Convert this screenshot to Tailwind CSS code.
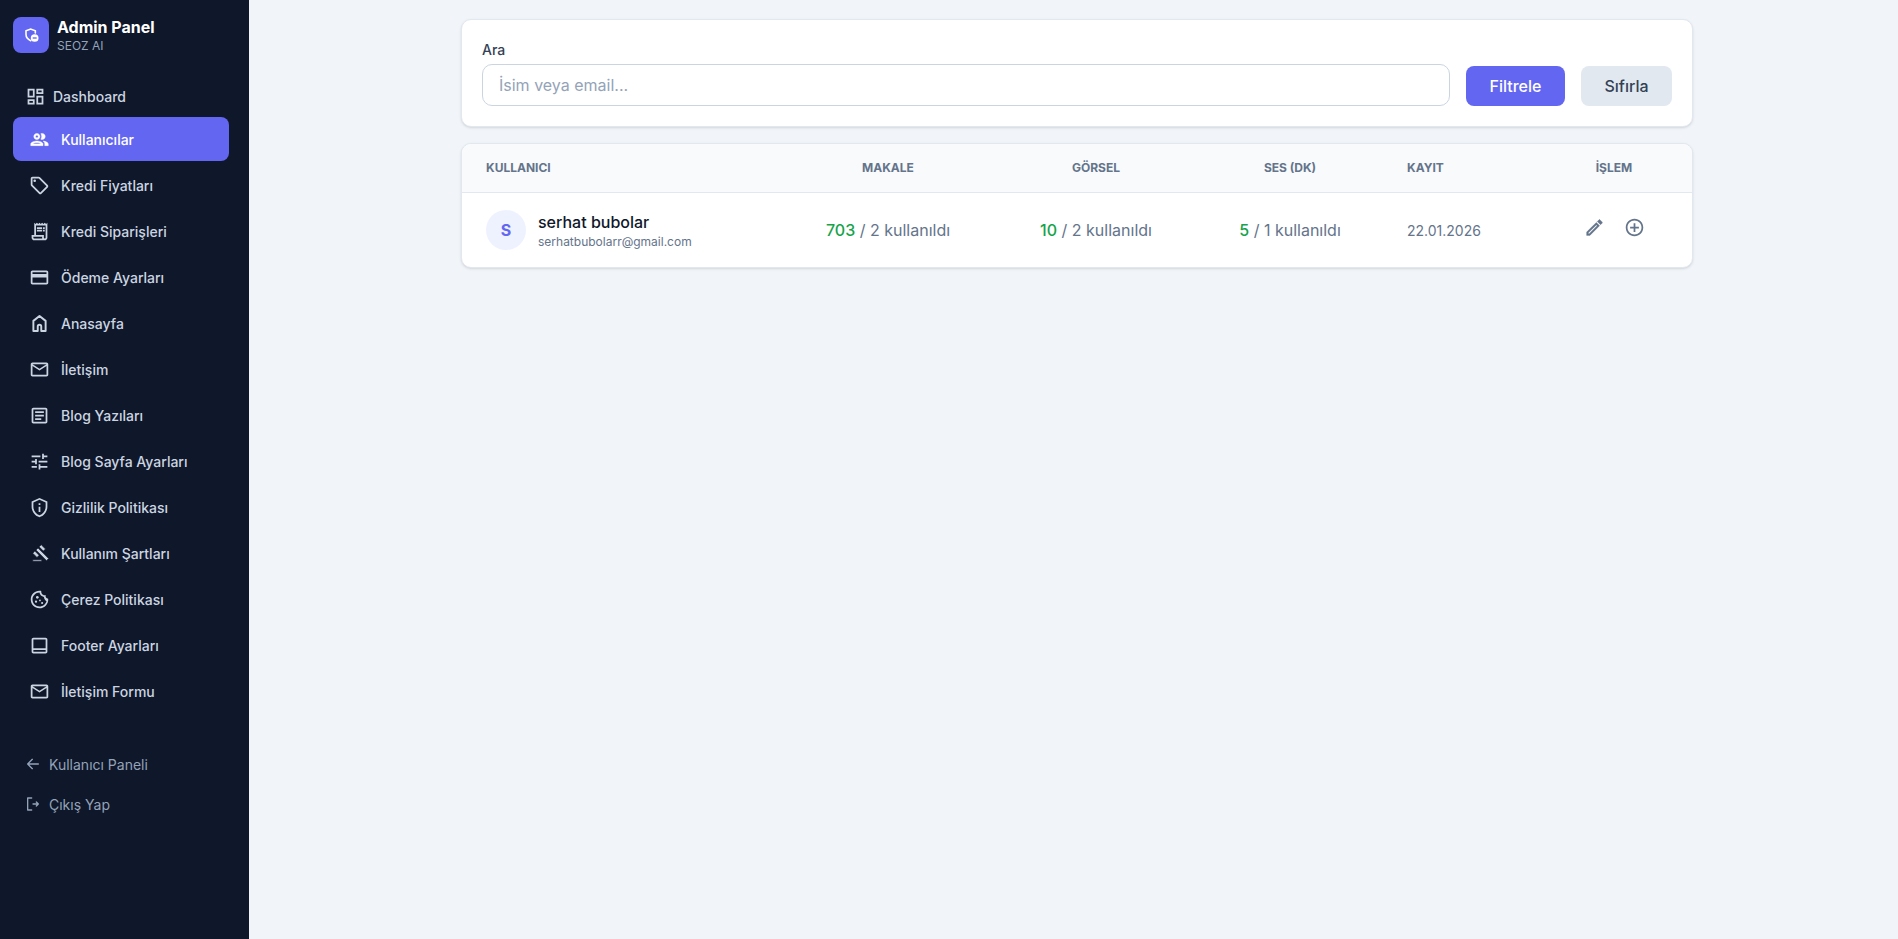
<!DOCTYPE html>
<html lang="tr">
<head>
<meta charset="utf-8">
<title>Admin Panel</title>
<script src="https://cdn.jsdelivr.net/npm/@tailwindcss/browser@4"></script>
</head>
<body class="bg-[#f1f5f9] font-['Inter',sans-serif]">
<div class="flex h-[939px] w-full overflow-hidden">
  <aside class="w-[249px] shrink-0 bg-[#0f172a] pl-[13px] pr-[20px] pt-[17px] flex flex-col">
    <div class="flex items-center gap-2 h-[36px]">
      <div class="w-[36px] h-[36px] rounded-lg bg-[#6366f1] flex items-center justify-center">
        <svg class="w-[16px] h-[16px] text-white" viewBox="0 0 24 24" fill="none" stroke="currentColor"><path stroke-width="2.400" stroke-linecap="round" d="M18.500 9V5.800L11.500 3 4.500 5.800V11c0 4.300 2.700 7.800 7 9.500"/><circle cx="17.500" cy="16.500" r="5.800" fill="currentColor" stroke="none"/><path stroke="#6366f1" stroke-width="2" d="M14.500 16.500h6"/></svg>
      </div>
      <div class="flex flex-col">
        <span class="text-white text-[16px] leading-[20px] font-bold">Admin Panel</span>
        <span class="text-[#94a3b8] text-[12px] leading-[16px] mt-px">SEOZ AI</span>
      </div>
    </div>
    <nav class="mt-[25px] flex flex-col gap-[2px] text-[14px] font-medium text-[#cbd5e1]">
      <a class="flex items-center gap-[7px] h-[36px] pl-[12px] mb-px"><svg class="w-[21px] h-[21px]" viewBox="0 0 24 24" fill="currentColor"><path d="M19 5v2h-4V5h4M9 5v6H5V5h4m10 8v6h-4v-6h4M9 17v2H5v-2h4M21 3h-8v6h8V3zM11 3H3v10h8V3zm10 8h-8v10h8V11zm-10 4H3v6h8v-6z"/></svg>Dashboard</a>
      <a class="flex items-center gap-[11px] h-[44px] pl-[16px] rounded-lg bg-[#6366f1] text-white"><svg class="w-[21px] h-[21px]" viewBox="0 0 24 24" fill="currentColor" stroke="currentColor" stroke-width="0.500"><path d="M9 13.750c-2.340 0-7 1.170-7 3.500V19h14v-1.750c0-2.330-4.660-3.500-7-3.500zM4.340 17c.84-.58 2.870-1.250 4.660-1.250s3.820.67 4.660 1.250H4.340zM9 12c1.930 0 3.500-1.570 3.500-3.500S10.930 5 9 5 5.500 6.570 5.500 8.500 7.070 12 9 12zm0-5c.83 0 1.500.67 1.500 1.500S9.830 10 9 10s-1.500-.67-1.500-1.500S8.170 7 9 7zm7.040 6.810c1.160.84 1.960 1.960 1.960 3.440V19h4v-1.750c0-2.020-3.500-3.170-5.960-3.440zM15 12c1.930 0 3.500-1.570 3.500-3.500S16.930 5 15 5c-.54 0-1.040.13-1.500.35.63.89 1 1.980 1 3.150s-.37 2.260-1 3.150c.46.22.96.35 1.500.35z"/></svg>Kullanıcılar</a>
      <a class="flex items-center gap-[11px] h-[44px] pl-[16px]"><svg class="w-[21px] h-[21px]" viewBox="0 0 24 24" fill="currentColor"><path d="M21.410 11.410l-8.830-8.830C12.210 2.210 11.700 2 11.170 2H4C2.900 2 2 2.900 2 4v7.170c0 .53.21 1.040.59 1.410l8.830 8.830c.78.78 2.050.78 2.830 0l7.170-7.170c.78-.78.78-2.040-.01-2.830zM12.830 20L4 11.170V4h7.170L20 12.830 12.830 20z"/><circle cx="6.500" cy="6.500" r="1.500"/></svg>Kredi Fiyatları</a>
      <a class="flex items-center gap-[11px] h-[44px] pl-[16px]"><svg class="w-[21px] h-[21px]" viewBox="0 0 24 24" fill="currentColor"><path d="M19.500 3.500 18 2l-1.500 1.500L15 2l-1.500 1.500L12 2l-1.500 1.500L9 2 7.500 3.500 6 2v14H3v3c0 1.660 1.340 3 3 3h12c1.660 0 3-1.340 3-3V2l-1.500 1.500zM15 20H6c-.55 0-1-.45-1-1v-1h10v2zm4-1c0 .55-.45 1-1 1s-1-.45-1-1v-3H8V5h11v14z"/><path d="M9 7h6v2H9zM16 7h2v2h-2zM9 10h6v2H9zM16 10h2v2h-2z"/></svg>Kredi Siparişleri</a>
      <a class="flex items-center gap-[11px] h-[44px] pl-[16px]"><svg class="w-[21px] h-[21px]" viewBox="0 0 24 24" fill="currentColor"><path d="M20 4H4c-1.110 0-1.990.89-1.990 2L2 18c0 1.110.89 2 2 2h16c1.110 0 2-.89 2-2V6c0-1.110-.89-2-2-2zm0 14H4v-6h16v6zm0-10H4V6h16v2z"/></svg>Ödeme Ayarları</a>
      <a class="flex items-center gap-[11px] h-[44px] pl-[16px]"><svg class="w-[21px] h-[21px]" viewBox="0 0 24 24" fill="none" stroke="currentColor" stroke-width="2.200" stroke-linejoin="round"><path d="M12 3.500 5 9v11.500h5v-5a2 2 0 0 1 4 0v5h5V9z"/></svg>Anasayfa</a>
      <a class="flex items-center gap-[11px] h-[44px] pl-[16px]"><svg class="w-[21px] h-[21px]" viewBox="0 0 24 24" fill="currentColor"><path d="M22 6c0-1.100-.9-2-2-2H4c-1.100 0-2 .9-2 2v12c0 1.100.9 2 2 2h16c1.100 0 2-.9 2-2V6zm-2 0l-8 5-8-5h16zm0 12H4V8l8 5 8-5v10z"/></svg>İletişim</a>
      <a class="flex items-center gap-[11px] h-[44px] pl-[16px]"><svg class="w-[21px] h-[21px]" viewBox="0 0 24 24" fill="currentColor"><path d="M19 5v14H5V5h14m0-2H5c-1.100 0-2 .9-2 2v14c0 1.100.9 2 2 2h14c1.100 0 2-.9 2-2V5c0-1.100-.9-2-2-2z"/><path d="M14 17H7v-2h7v2zm3-4H7v-2h10v2zm0-4H7V7h10v2z"/></svg>Blog Yazıları</a>
      <a class="flex items-center gap-[11px] h-[44px] pl-[16px]"><svg class="w-[21px] h-[21px]" viewBox="0 0 24 24" fill="currentColor"><path d="M3 17v2h6v-2H3zM3 5v2h10V5H3zm10 16v-2h8v-2h-8v-2h-2v6h2zM7 9v2H3v2h4v2h2V9H7zm14 4v-2H11v2h10zm-6-4h2V7h4V5h-4V3h-2v6z"/></svg>Blog Sayfa Ayarları</a>
      <a class="flex items-center gap-[11px] h-[44px] pl-[16px]"><svg class="w-[21px] h-[21px]" viewBox="0 0 24 24" fill="currentColor"><path d="M12 3.190l7 3.110V11c0 4.520-2.980 8.690-7 9.930-4.020-1.240-7-5.410-7-9.930V6.300l7-3.110M12 1L3 5v6c0 5.550 3.840 10.740 9 12 5.160-1.260 9-6.450 9-12V5l-9-4zm-1 6h2v2h-2zm0 4h2v6h-2z"/></svg>Gizlilik Politikası</a>
      <a class="flex items-center gap-[11px] h-[44px] pl-[16px]"><span class="w-[21px] h-[21px] flex items-center justify-center"><svg class="w-[18px] h-[18px] translate-x-px" viewBox="0 0 24 24" fill="currentColor" stroke="#0f172a" stroke-width="0.900"><path d="M1 21h12v2H1v-2zM5.240 8.070l2.830-2.830 14.140 14.140-2.830 2.830L5.240 8.070zM12.320 1l5.660 5.660-2.830 2.830-5.660-5.660L12.320 1zM3.830 9.480l5.660 5.660-2.830 2.830L1 12.310l2.830-2.830z"/></svg></span>Kullanım Şartları</a>
      <a class="flex items-center gap-[11px] h-[44px] pl-[16px]"><svg class="w-[21px] h-[21px]" viewBox="0 0 24 24" fill="currentColor"><path fill-rule="evenodd" d="M12.600 2.100C6.900 1.700 2 6.200 2 12c0 5.500 4.500 10 10 10 5.900 0 10.500-5.100 9.950-11-1.800 0-3.700-2-2.700-4.200-3 1-5.800-1.600-5.200-4.600-.5-.05-1-.08-1.450-.1ZM12 4.100c.3 2.600 2.400 4.600 5 5 .3 2.400 2 4.400 3 4.900-.9 3.500-4.200 6-8 6-4.400 0-8-3.600-8-8 0-4 3.400-7.800 8-7.900Z"/><circle cx="9.500" cy="9.500" r="1.500"/><circle cx="8" cy="14.500" r="1.300"/><circle cx="15" cy="16" r="1.200"/><circle cx="12.500" cy="13" r="1"/></svg>Çerez Politikası</a>
      <a class="flex items-center gap-[11px] h-[44px] pl-[16px]"><svg class="w-[21px] h-[21px]" viewBox="0 0 24 24" fill="currentColor"><path fill-rule="evenodd" d="M19 3H5c-1.100 0-2 .9-2 2v14c0 1.100.9 2 2 2h14c1.100 0 2-.9 2-2V5c0-1.100-.9-2-2-2zm0 2v10H5V5h14zM5 19v-2h14v2H5z"/></svg>Footer Ayarları</a>
      <a class="flex items-center gap-[11px] h-[44px] pl-[16px]"><svg class="w-[21px] h-[21px]" viewBox="0 0 24 24" fill="currentColor"><path d="M22 6c0-1.100-.9-2-2-2H4c-1.100 0-2 .9-2 2v12c0 1.100.9 2 2 2h16c1.100 0 2-.9 2-2V6zm-2 0l-8 5-8-5h16zm0 12H4V8l8 5 8-5v10z"/></svg>İletişim Formu</a>
    </nav>
    <div class="mt-[31px] flex flex-col text-[14px] text-[#94a3b8]">
      <a class="flex items-center gap-[8px] h-[40px] pl-[12px]"><svg class="w-[16px] h-[16px]" viewBox="0 0 24 24" fill="none" stroke="currentColor" stroke-width="2" stroke-linecap="round" stroke-linejoin="round"><path d="M20 12H4M11 5l-7 7 7 7"/></svg>Kullanıcı Paneli</a>
      <a class="flex items-center gap-[8px] h-[40px] pl-[12px]"><svg class="w-[16px] h-[16px]" viewBox="0 0 24 24" fill="none" stroke="currentColor" stroke-width="2" stroke-linecap="round" stroke-linejoin="round"><path d="M10 3H4v18h6M12 12h8M17 9l3 3-3 3"/></svg>Çıkış Yap</a>
    </div>
  </aside>
  <main class="flex-1 pl-[212px] pt-[19px]">
    <div class="w-[1232px] flex flex-col gap-[16px]">
      <section class="h-[108px] rounded-[10px] bg-white border border-[#e2e8f0] shadow-sm px-[20px] flex items-end gap-[16px] pb-[20px]">
        <div class="flex-1">
          <label class="block text-[14px] leading-[20px] font-medium text-[#334155] mb-[4px]">Ara</label>
          <input class="w-full h-[42px] rounded-[10px] border border-[#cbd5e1] bg-white px-[16px] text-[16px] placeholder:text-[#94a3b8]" placeholder="İsim veya email...">
        </div>
        <button class="w-[99px] h-[40px] rounded-lg bg-[#6366f1] text-white text-[16px] font-[450]">Filtrele</button>
        <button class="w-[91px] h-[40px] rounded-lg bg-[#e2e8f0] text-[#334155] text-[16px] font-[450]">Sıfırla</button>
      </section>
      <section class="rounded-[10px] bg-white border border-[#e2e8f0] shadow-sm overflow-hidden">
        <div class="grid grid-cols-[316px_220px_196px_192px_150px_156px] h-[49px] items-center bg-[#f8fafc] border-b border-[#e2e8f0] text-[12px] font-bold text-[#64748b]">
          <div class="pl-[24px]">KULLANICI</div>
          <div class="text-center">MAKALE</div>
          <div class="text-center">GÖRSEL</div>
          <div class="text-center">SES (DK)</div>
          <div class="pl-[21px]">KAYIT</div>
          <div class="text-center">İŞLEM</div>
        </div>
        <div class="grid grid-cols-[316px_220px_196px_192px_150px_156px] h-[74px] items-center">
          <div class="pl-[24px] flex items-center gap-[12px]">
            <div class="w-[40px] h-[40px] rounded-full bg-[#eef2ff] flex items-center justify-center text-[#6366f1] font-bold text-[16px]">S</div>
            <div class="flex flex-col">
              <span class="text-[16px] leading-[24px] font-[450] text-[#0f172a]">serhat bubolar</span>
              <span class="text-[12px] leading-[16px] text-[#64748b]">serhatbubolarr@gmail.com</span>
            </div>
          </div>
          <div class="text-center text-[16px] text-[#64748b]"><span class="text-[#16a34a] font-[450]">703</span> / 2 kullanıldı</div>
          <div class="text-center text-[16px] text-[#64748b]"><span class="text-[#16a34a] font-[450]">10</span> / 2 kullanıldı</div>
          <div class="text-center text-[16px] text-[#64748b]"><span class="text-[#16a34a] font-[450]">5</span> / 1 kullanıldı</div>
          <div class="pl-[21px] text-[14px] text-[#64748b]">22.01.2026</div>
          <div class="flex justify-center items-center gap-[19px] pb-[6px]">
            <svg class="w-[21px] h-[21px] text-[#64748b]" viewBox="0 0 24 24" fill="currentColor" stroke="currentColor" stroke-width="0.400"><path d="M3 17.250V21h3.750L17.810 9.940l-3.750-3.750L3 17.250zM5.920 19H5v-.92l9.060-9.060.92.92L5.920 19zM20.710 5.630l-2.340-2.340c-.39-.39-1.020-.39-1.410 0l-1.830 1.830 3.750 3.750 1.830-1.830c.39-.39.39-1.030 0-1.410z"/></svg>
            <svg class="w-[21px] h-[21px] text-[#64748b]" viewBox="0 0 24 24" fill="currentColor"><path d="M13 7h-2v4H7v2h4v4h2v-4h4v-2h-4V7zm-1-5C6.480 2 2 6.480 2 12s4.480 10 10 10 10-4.480 10-10S17.520 2 12 2zm0 18c-4.410 0-8-3.590-8-8s3.590-8 8-8 8 3.590 8 8-3.590 8-8 8z"/></svg>
          </div>
        </div>
      </section>
    </div>
  </main>
</div>
</body>
</html>
